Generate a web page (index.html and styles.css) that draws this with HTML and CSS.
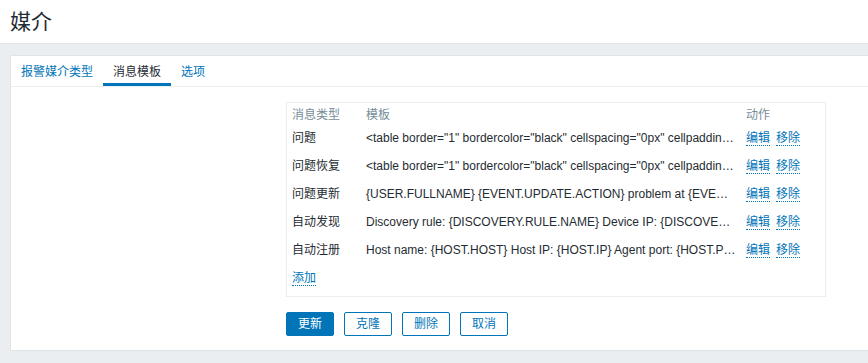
FILE: index.html
```html
<!DOCTYPE html>
<html lang="zh-CN">
<head>
  <meta charset="UTF-8" />
  <title>媒介</title>
  <link rel="stylesheet" href="styles.css">
</head>
<body>
  <header class="page-header">
    <h1>媒介</h1>
  </header>

  <main class="content">
    <div class="tabs">
      <a class="tab">报警媒介类型</a>
      <a class="tab active">消息模板</a>
      <a class="tab">选项</a>
    </div>

    <div class="tab-body">
      <div class="templates">
        <table class="list-table">
          <colgroup>
            <col class="col-type">
            <col class="col-template">
            <col class="col-action">
          </colgroup>
          <thead>
            <tr>
              <th>消息类型</th>
              <th>模板</th>
              <th>动作</th>
            </tr>
          </thead>
          <tbody>
            <tr>
              <td>问题</td>
              <td class="trunc">&lt;table border="1" bordercolor="black" cellspacing="0px" cellpadding="4px" width="100%"&gt;</td>
              <td class="actions"><a class="link">编辑</a><a class="link">移除</a></td>
            </tr>
            <tr>
              <td>问题恢复</td>
              <td class="trunc">&lt;table border="1" bordercolor="black" cellspacing="0px" cellpadding="4px" width="100%"&gt;</td>
              <td class="actions"><a class="link">编辑</a><a class="link">移除</a></td>
            </tr>
            <tr>
              <td>问题更新</td>
              <td class="trunc">{USER.FULLNAME} {EVENT.UPDATE.ACTION} problem at {EVENT.UPDATE.DATE} {EVENT.UPDATE.TIME}.</td>
              <td class="actions"><a class="link">编辑</a><a class="link">移除</a></td>
            </tr>
            <tr>
              <td>自动发现</td>
              <td class="trunc">Discovery rule: {DISCOVERY.RULE.NAME} Device IP: {DISCOVERY.DEVICE.IPADDRESS}</td>
              <td class="actions"><a class="link">编辑</a><a class="link">移除</a></td>
            </tr>
            <tr>
              <td>自动注册</td>
              <td class="trunc">Host name: {HOST.HOST} Host IP: {HOST.IP} Agent port: {HOST.PORT}</td>
              <td class="actions"><a class="link">编辑</a><a class="link">移除</a></td>
            </tr>
            <tr>
              <td colspan="3"><a class="link">添加</a></td>
            </tr>
          </tbody>
        </table>
      </div>

      <div class="buttons">
        <button class="btn">更新</button>
        <button class="btn btn-alt">克隆</button>
        <button class="btn btn-alt">删除</button>
        <button class="btn btn-alt">取消</button>
      </div>
    </div>
  </main>
</body>
</html>
```

FILE: styles.css
```css
:root {
  --blue: #0275b8;
  --text: #1f2c33;
  --muted: #768d99;
  --bg: #ebeef0;
  --border: #dfe4e7;
}

* {
  margin: 0;
  padding: 0;
  box-sizing: border-box;
}

body {
  background: var(--bg);
  color: var(--text);
  font-family: "Liberation Sans", Arial, "Noto Sans CJK SC", sans-serif;
  font-size: 12px;
  line-height: 14px;
  overflow: hidden;
}

.page-header {
  height: 44px;
  background: #fff;
  border-bottom: 1px solid var(--border);
  display: flex;
  align-items: center;
  padding-left: 10px;
}

.page-header h1 {
  font-size: 21px;
  font-weight: normal;
  line-height: 24px;
}

.content {
  margin: 11px -10px 0 10px;
  background: #fff;
  border: 1px solid var(--border);
}

.tabs {
  display: flex;
  height: 31px;
  border-bottom: 1px solid var(--bg);
}

.tab {
  padding: 9px 10px 0;
  color: var(--blue);
  border-bottom: 3px solid transparent;
  cursor: pointer;
}

.tab.active {
  color: var(--text);
  border-bottom-color: var(--blue);
}

.tab-body {
  padding: 15px 0 14px 275px;
}

.templates {
  width: 540px;
  border: 1px solid var(--bg);
  padding-bottom: 4px;
}

.list-table {
  border-collapse: collapse;
  table-layout: fixed;
  width: 528px;
}

.col-type { width: 74px; }
.col-template { width: 380px; }
.col-action { width: 74px; }

.list-table th {
  font-weight: normal;
  color: var(--muted);
  text-align: left;
  padding: 5px 5px 2px;
}

.list-table td {
  padding: 7px 5px;
  white-space: nowrap;
}

.trunc {
  overflow: hidden;
  text-overflow: ellipsis;
}

.actions .link + .link {
  margin-left: 6px;
}

.link {
  color: var(--blue);
  text-decoration: none;
  border-bottom: 1px dotted var(--blue);
  cursor: pointer;
}

.buttons {
  display: flex;
  gap: 10px;
  margin-top: 15px;
}

.btn {
  height: 24px;
  padding: 0 11px;
  font: inherit;
  color: #fff;
  background: var(--blue);
  border: 1px solid var(--blue);
  border-radius: 2px;
  cursor: pointer;
}

.btn-alt {
  background: #fff;
  color: var(--blue);
}
```
